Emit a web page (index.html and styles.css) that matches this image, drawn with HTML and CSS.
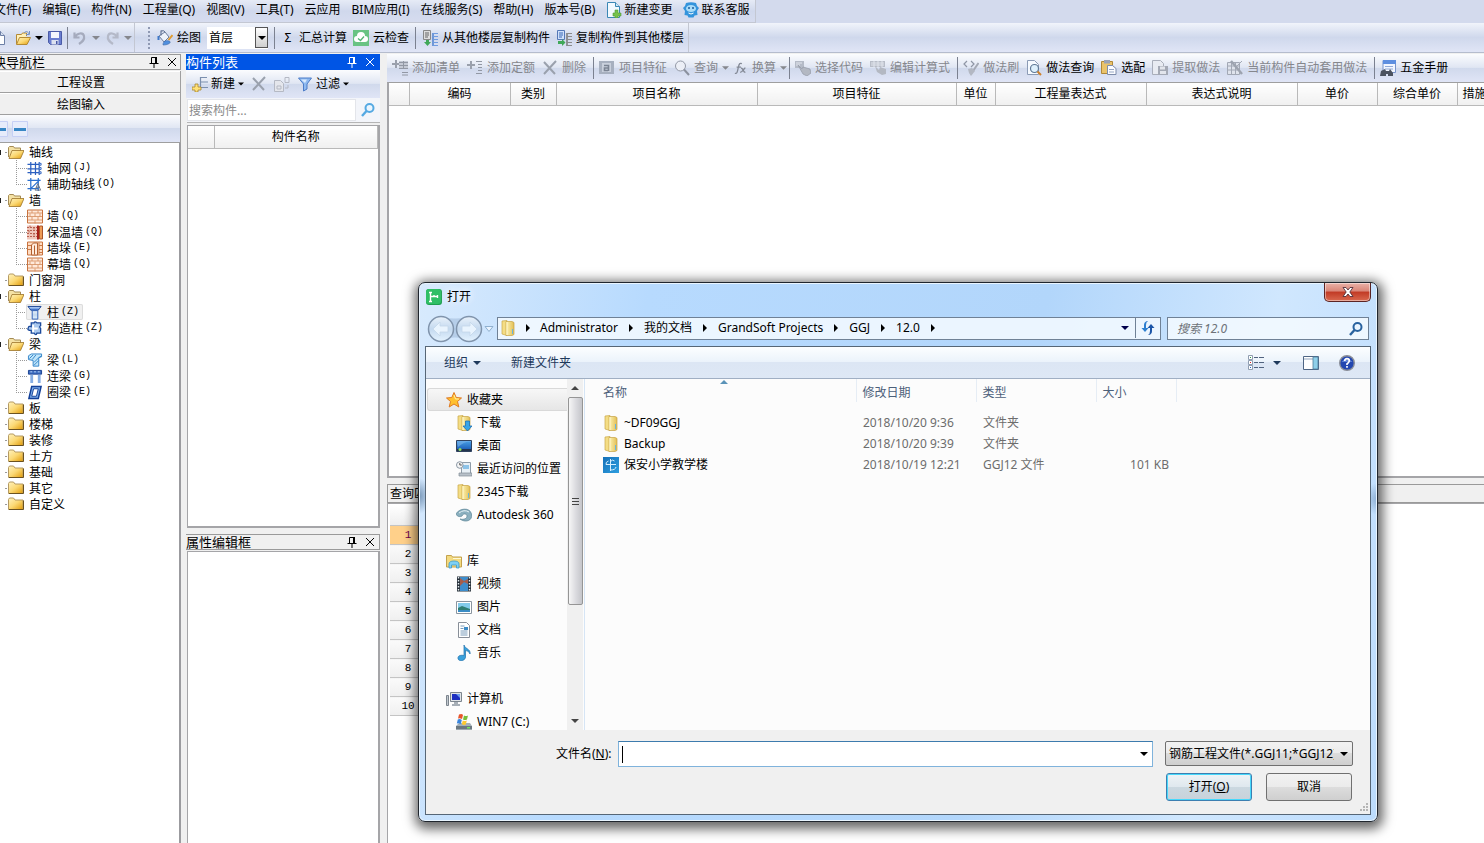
FILE: index.html
```html
<!DOCTYPE html>
<html lang="zh-CN">
<head>
<meta charset="utf-8">
<title>工程量</title>
<link rel="stylesheet" href="styles.css">
</head>
<body>
<svg class="defs" aria-hidden="true">
  <defs>
    <linearGradient id="gFold" x1="0" y1="0" x2="1" y2="1"><stop offset="0" stop-color="#fff3bf"/><stop offset=".5" stop-color="#fbd873"/><stop offset="1" stop-color="#e09a08"/></linearGradient>
    <linearGradient id="gWin" x1="0" y1="0" x2="1" y2="0"><stop offset="0" stop-color="#fdf3b4"/><stop offset="1" stop-color="#e2bf55"/></linearGradient>
    <linearGradient id="gBlue" x1="0" y1="0" x2="0" y2="1"><stop offset="0" stop-color="#4aa3e8"/><stop offset="1" stop-color="#1350ae"/></linearGradient>
    <linearGradient id="gCyan" x1="0" y1="0" x2="1" y2="1"><stop offset="0" stop-color="#1470b8"/><stop offset="1" stop-color="#2f9fe0"/></linearGradient>
    <linearGradient id="gPale" x1="0" y1="0" x2="0" y2="1"><stop offset="0" stop-color="#e9f2fb"/><stop offset=".5" stop-color="#c4d9ef"/><stop offset="1" stop-color="#e4f3ff"/></linearGradient>
  </defs>
  <symbol id="page" viewBox="0 0 16 16"><path d="M2.500 1.500h8l4 4v9h-12z" fill="#fdfeff" stroke="#6c7fa6"/><path d="M10.500 1.500v4h4" fill="#d5e0f0" stroke="#6c7fa6"/></symbol>
  <symbol id="open" viewBox="0 0 16 16"><path d="M1.500 14V4.500h5l1-1.500h4v3" fill="#fff0b8" stroke="#b48a35"/><path d="M9 3c2-2.500 4-1.500 5 1M14.500 1v3.500H11" fill="none" stroke="#7592c4"/><path d="M1.500 14.500l3-7h11l-3.500 7z" fill="url(#gFold)" stroke="#b48a35"/></symbol>
  <symbol id="save" viewBox="0 0 16 16"><path d="M1.500 1.500h13v13h-11l-2-2z" fill="#6a7ed0" stroke="#4a5ba6"/><path d="M4 2h8v6H4z" fill="#f4f7fd"/><path d="M4.500 10h7v4.500h-7z" fill="#dce2f0"/><path d="M9 11h1.500v3H9z" fill="#4657a5"/></symbol>
  <symbol id="undo" viewBox="0 0 16 16"><path d="M2.500 2.500v5h5M3 7c2-4 8-5 9-1s-2 6-5 8" fill="none" stroke="#a5abbd" stroke-width="2.200"/></symbol>
  <symbol id="redo" viewBox="0 0 16 16"><path d="M13.500 2.500v5h-5M13 7C11 3 5 2 4 6s2 6 5 8" fill="none" stroke="#b4b9c8" stroke-width="2.200"/></symbol>
  <symbol id="paint" viewBox="0 0 16 16"><path d="M2 6l6-4 4 5-5 5z" fill="#eef3fb" stroke="#6d7e9d"/><path d="M4 .5v5M4 1q3-1 4 1" fill="none" stroke="#55678a"/><path d="M1.500 6v4" stroke="#3f79c9" stroke-width="2"/><path d="M15.500 5l-4 5" stroke="#e09b2e" stroke-width="2"/><path d="M6 15c0-4 3-5 6-4s0 4-6 4z" fill="#4f8fdf" stroke="#3b67a5" stroke-width=".6"/></symbol>
  <symbol id="cloudok" viewBox="0 0 16 16"><path d="M0 0h16v16H0z" fill="#68c383"/><path d="M4 12a3 3 0 0 1 0-6 4 4 0 0 1 8 0 3 3 0 0 1 0 6z" fill="#fff"/><path d="M5 8.500l2.500 2 3.500-4" fill="none" stroke="#55b574" stroke-width="1.300"/></symbol>
  <symbol id="copyfrom" viewBox="0 0 16 16"><path d="M1.500.5h7v9h-7z" fill="#dedede" stroke="#888"/><path d="M3 3h4M3 5h4M3 7h3" stroke="#666"/><path d="M11 3v13" stroke="#4d80ce" stroke-width="1.500"/><path d="M11 3.500h5M11 6.500h5M11 9.500h5M11 12.500h5M11 15.500h5" stroke="#6f9be0"/><path d="M4 10v2H2l3.500 4L9 12H7v-2z" fill="#40a858"/></symbol>
  <symbol id="copyto" viewBox="0 0 16 16"><path d="M1.500.5h7v9h-7z" fill="#cfe0fb" stroke="#5478b7"/><path d="M3 3h4M3 5h4M3 7h3" stroke="#3868b5"/><path d="M11 3v13" stroke="#777" stroke-width="1.500"/><path d="M11 3.500h5M11 6.500h5M11 9.500h5M11 12.500h5M11 15.500h5" stroke="#8b8b8b"/><path d="M2 11h4V9l3.500 3.500L6 16v-2H2z" fill="#40a858"/></symbol>
  <symbol id="pageplus" viewBox="0 0 16 16"><path d="M1.500.5h8l4 4v11h-12z" fill="#f2f9ff" stroke="#3b87b5"/><path d="M9.500.5v4h4" fill="#cfe6f5" stroke="#3b87b5"/><path d="M9 8h3v3h3v3h-3v2H9v-2H7v-3h2z" fill="#75c14c" stroke="#4f9a35" stroke-width=".6"/></symbol>
  <symbol id="mascot" viewBox="0 0 16 16"><path d="M3 1q5-1.500 10 0l1 3 2 2-2 3 .5 4-3 .5-1 2h-5l-1-2-3-.5L2 9 0 6l2-2z" fill="#3494dc"/><ellipse cx="8" cy="6.500" rx="5" ry="3.600" fill="#a9dcf8"/><circle cx="6" cy="6" r="1" fill="#1d5c9c"/><circle cx="10" cy="6" r="1" fill="#1d5c9c"/><path d="M5.500 11q2.500 2 5 0" stroke="#fff" fill="none"/></symbol>
  <symbol id="pin" viewBox="0 0 12 12"><path d="M3.500 7V1.500h5V7M1.500 7.500h9M6 8v4" fill="none" stroke="currentColor"/><path d="M7 1h2v6H7z" fill="currentColor"/></symbol>
  <symbol id="close" viewBox="0 0 12 12"><path d="M2 2l8 8M10 2l-8 8" stroke="currentColor"/></symbol>
  <symbol id="down" viewBox="0 0 8 8"><path d="M0 2h8L4 6z" fill="currentColor"/></symbol>
  <symbol id="right" viewBox="0 0 8 8"><path d="M2 0l4 4-4 4z" fill="currentColor"/></symbol>
  <symbol id="newitem" viewBox="0 0 16 16"><path d="M8.500 1v11M8 1.500h7M8 6h8M8 11.500h8" stroke="#7b8fae" stroke-width="1.200" fill="none"/><path d="M3 8h3v3h3v3H6v2H3v-2H0v-3h3z" fill="#ffe27a" stroke="#a8872d" stroke-width=".8"/></symbol>
  <symbol id="delx" viewBox="0 0 16 16"><path d="M2 2l11 12M14 1L2 14" stroke="#9aa1ad" stroke-width="2"/></symbol>
  <symbol id="copyg" viewBox="0 0 16 16"><path d="M.5 4.500h6l3 3v8h-9z" fill="#e4e6ec" stroke="#b5b9c4"/><path d="M3 10h4v3H3zM11 1.500h4v5h-4zM11 12h3V9" fill="none" stroke="#b5b9c4"/></symbol>
  <symbol id="funnel" viewBox="0 0 16 16"><path d="M1.500 2h13L10 8v5l-3.500 2V8z" fill="#8fbaf0" stroke="#4c7cc8"/><path d="M4 3.500h6L8 7z" fill="#d9eafe"/></symbol>
  <symbol id="mag" viewBox="0 0 16 16"><circle cx="9.500" cy="6" r="4" fill="#eaf5ff" stroke="currentColor" stroke-width="2"/><path d="M6.500 9L2 14" stroke="currentColor" stroke-width="2.400"/></symbol>
  <symbol id="minus" viewBox="0 0 16 16"><path d="M.5.5h15v15H.5z" fill="#e6ecfb" stroke="#c6d0f5"/><path d="M2 7h12v3H2z" fill="#3787c5"/></symbol>
  <symbol id="addrow" viewBox="0 0 16 16"><path d="M3 0h2v3h3v2H5v3H3V5H0V3h3z" fill="#9aa0ac"/><path d="M7 1h9v8H7z" fill="#c5cad5"/><path d="M7 2.500h9M7 5.500h9M7 8.500h9M11.500 1v8M10 12.500h6M10 15h6" stroke="#9298a4"/></symbol>
  <symbol id="addquota" viewBox="0 0 16 16"><path d="M3 1h2v3h3v2H5v3H3V6H0V4h3z" fill="#9aa0ac"/><path d="M9 1.500h6M11 4.500h4M11 7.500h4M11 10.500h4M9 13.500h6" stroke="#9298a4"/></symbol>
  <symbol id="feature" viewBox="0 0 16 16"><path d="M0 1h15v13H0z" fill="#a7b0bf"/><path d="M3 3h9v9H3z" fill="#c9d0dc"/><path d="M5 5.500h4.500V11M9 8H5.500v2.500H9" fill="none" stroke="#7b8493" stroke-width="1.600"/></symbol>
  <symbol id="glass" viewBox="0 0 16 16"><circle cx="6.500" cy="6" r="5" fill="#eceff6" stroke="#9399a6"/><path d="M10 9.500l5 5.500" stroke="#8b919e" stroke-width="2"/></symbol>
  <symbol id="fx" viewBox="0 0 16 16"><path d="M1 14c3 1 3-3 4-7s1.500-5 4-4M3 7h5M8 8c3 0 2 5 5 5M13 8c-2 0-3 5-6 5" fill="none" stroke="#838995" stroke-width="1.500"/></symbol>
  <symbol id="selcode" viewBox="0 0 16 16"><path d="M0 1h9v7H0z" fill="#b5bbc7"/><path d="M1 3h6M1 5h4" stroke="#e3e7ef"/><path d="M3 5l4 4 1-2 7 2 1 4-4 3-4-2z" fill="#b3b8c2" stroke="#949aa6" stroke-width=".7"/></symbol>
  <symbol id="editexp" viewBox="0 0 16 16"><path d="M0 1h15v6H0z" fill="#b8bdc8"/><path d="M1 3h13M1 5h13M4 1v6M8 1v6M12 1v6" stroke="#e1e5ed"/><path d="M5 6l4 4 1-3 6 2v5l-4 1-5-3z" fill="#b3b8c2"/></symbol>
  <symbol id="brush" viewBox="0 0 16 16"><path d="M4 1L1 4l3 3M8 1l3 3-3 3" fill="none" stroke="#8f96a5" stroke-width="1.200"/><path d="M15.500 3L10 11" stroke="#a4a9b4" stroke-width="2"/><path d="M5 9l4-1 3 3-4 5-2-3z" fill="#b3b8c3"/></symbol>
  <symbol id="pagemag" viewBox="0 0 16 16"><path d="M1.500.5h7l4 4v10h-11z" fill="#f6faff" stroke="#8b9bb5"/><circle cx="8.500" cy="8.500" r="4" fill="#def0fc" stroke="#5f7895" stroke-width="1.200"/><path d="M11.500 11.500l3.500 3.500" stroke="#cf812c" stroke-width="2"/></symbol>
  <symbol id="paste" viewBox="0 0 16 16"><path d="M.5 1.500h11v12H.5z" fill="#eac36a" stroke="#b08838"/><path d="M3 0h6v3.500H3z" fill="#9ba3b5"/><path d="M6.500 5.500h5l3.500 3v6H6.500z" fill="#fbfcff" stroke="#7d8cab"/><path d="M8 9.500h5M8 12h5" stroke="#98a8c4"/></symbol>
  <symbol id="extract" viewBox="0 0 16 16"><path d="M.5.5h8l3 3v11H.5z" fill="#e8ebf2" stroke="#a9aeba"/><path d="M6 6h10v9H6z" fill="#a4a9b5"/><path d="M8 6.500h5v3H8zM8 11h6v3H8z" fill="#e2e5ec"/></symbol>
  <symbol id="autoapply" viewBox="0 0 16 16"><path d="M.5 2.500h12v12H.5z" fill="#dfe3ec" stroke="#a2a8b5"/><path d="M1 6h12M1 10h12M4.500 3v12M8.500 3v12" stroke="#a2a8b5"/><path d="M4 1l11 13" stroke="#9da3af" stroke-width="2.400"/><path d="M10 6l5-5" stroke="#a2a8b5"/></symbol>
  <symbol id="manual" viewBox="0 0 16 16"><path d="M3 .5h12.500v12H3z" fill="#f2f6ff" stroke="#7894ca"/><path d="M3 0h13v4H3z" fill="#5e8fe0"/><path d="M5 6.500h8M5 9h8" stroke="#93acd8"/><path d="M1 11l4-2 1 2h3l1-2 3 4v3H8v-2H6v2H0z" fill="#4c535f"/></symbol>
  <symbol id="fopen" viewBox="0 0 16 14"><path d="M.5 12V2.500l1-1h4l1 1.500h6V6" fill="#f5e2a5" stroke="#a48b55"/><path d="M1 13.500L4 5.500h12L12.500 13.500z" fill="url(#gFold)" stroke="#9c742a" stroke-width=".8"/></symbol>
  <symbol id="fclosed" viewBox="0 0 16 14"><path d="M.5 12.500v-10l1-1.500h4l1.500 2h8v9.500z" fill="url(#gFold)" stroke="#b59a62"/><path d="M1 12.500h14.500v-9" fill="none" stroke="#6b5220"/></symbol>
  <symbol id="axis" viewBox="0 0 16 16"><path d="M3.500 1v14M8.500 1v14M0 3.500h12M0 8.500h12M0 12.500h12M12.500 1v14" stroke="#2b5fc0" stroke-width="1.300"/><path d="M12.500 2.500h2v2h-2zM12.500 7h2v2h-2zM12.500 11.500h2v2h-2z" fill="#fff" stroke="#2b5fc0"/></symbol>
  <symbol id="axis2" viewBox="0 0 16 16"><path d="M3.500 1v14M0 3.500h14M0 12.500h12M11.500 1v14M3 13L13 3" stroke="#2b70d0" stroke-width="1.300"/><path d="M8 14l3-7 3 7zM9 11h4" fill="none" stroke="#6d7686"/></symbol>
  <symbol id="brick" viewBox="0 0 16 14"><path d="M.5.5h15v13H.5z" fill="#ffe9da" stroke="#c8733f"/><path d="M1 3.500h14M1 7h14M1 10.500h14M5 1v2.500M11 1v2.500M3 4v3M8 4v3M13 4v3M5 7.500v3M11 7.500v3M8 11v3" stroke="#d48c5c" stroke-width=".8"/></symbol>
  <symbol id="brick2" viewBox="0 0 16 14"><path d="M0 0h11v14H0z" fill="#f0c7bb"/><path d="M0 2h10M0 5h10M0 8h10M0 11h10M3 0v2M7 2v3M2 5v3M7 8v3" stroke="#b8604f" stroke-dasharray="2 1"/><path d="M10 0h2v14h-2z" fill="#a81f18"/><path d="M12.500.5h3v13h-3z" fill="#ee9c57" stroke="#ab552a"/></symbol>
  <symbol id="pier" viewBox="0 0 16 14"><path d="M.5.5h15v13H.5z" fill="#ffdcc2" stroke="#c8733f"/><path d="M1 4h4M1 8h4M12 4h3M12 8h3M12 11h3M12 1v12" stroke="#c97945"/><path d="M4.500 3.500l2-2h4v12h-6z" fill="#ffeadb" stroke="#b4602f"/><path d="M7.500 4v9" stroke="#b4602f"/></symbol>
  <symbol id="column" viewBox="0 0 16 16"><path d="M.5 1.500h14l-3 4h-8z" fill="#5a8de0" stroke="#143f91"/><path d="M5 6h6v9H5z" fill="url(#gPale)" stroke="#2d5eb5"/><path d="M2 3h11" stroke="#cde2fa"/></symbol>
  <symbol id="ccolumn" viewBox="0 0 16 16"><path d="M4 2h3q1-2 3 0h4v3q-2 1 0 3v5h-4q-1 3-3 0H4v-3q-5 0-3-3 0-2 3-1z" fill="#a9c8ee" stroke="#1c4a9c" stroke-width="1.400"/><path d="M6 4v8M6 8h5" stroke="#fff" stroke-width="2"/></symbol>
  <symbol id="beam" viewBox="0 0 16 16"><path d="M1 3l3-2h11v3l-3 1v9H6V8L1 7z" fill="#bfe4fa" stroke="#3384c8"/><path d="M2 6l4-4M5 7l4-5M12 5l3-2M7 10l5-5M7 13l5-5" stroke="#3384c8"/></symbol>
  <symbol id="lbeam" viewBox="0 0 16 16"><path d="M1 1.500h14v4H1z" fill="#3f6fc2" stroke="#153e8f"/><path d="M3 3h2M7 3h2M11 3h2" stroke="#bcd5f7"/><path d="M3 6h3v9H3zM11 6h3v9h-3z" fill="#86aee4"/></symbol>
  <symbol id="rbeam" viewBox="0 0 16 16"><path d="M4.500 1.500h10l-3 13H1.500z" fill="#7badea" stroke="#123f97" stroke-width="1.600"/><path d="M6.500 4h5l-2 8H4.500z" fill="#fff" stroke="#123f97"/></symbol>
  <symbol id="wfold" viewBox="0 0 16 16"><path d="M2 1l5-.5v15L2 14z" fill="#f4dd85" stroke="#c9a749" stroke-width=".7"/><path d="M6 1.500h6l2 1v12l-2 1H6z" fill="url(#gWin)" stroke="#c5a244" stroke-width=".7"/><path d="M7 2v13" stroke="#fff6c9"/><path d="M12.500 9v5" stroke="#69b5df"/></symbol>
  <symbol id="star" viewBox="0 0 16 16"><path d="M8 .5l2.200 5 5.300.5-4 3.500 1.300 5.500L8 12l-4.800 3 1.300-5.500-4-3.500 5.300-.5z" fill="#ffc02e" stroke="#df7a22"/><path d="M8 3l1.500 4H13" fill="none" stroke="#fff2a8"/></symbol>
  <symbol id="dl" viewBox="0 0 16 16"><use href="#wfold"/><path d="M9.500 6h4v5H16l-4.500 5L7 11h2.500z" fill="#38a5e8" stroke="#1f71b5" stroke-width=".8"/></symbol>
  <symbol id="desk" viewBox="0 0 16 16"><path d="M.5 2.500h15v11H.5z" fill="url(#gBlue)" stroke="#30425e"/><path d="M1 11h14v2H1z" fill="#23334e"/><circle cx="4" cy="11.500" r="1.500" fill="#8ddc62"/><path d="M2 9q7-6 13-5V3H1z" fill="#7db4ea" opacity=".6"/></symbol>
  <symbol id="recent" viewBox="0 0 16 16"><path d="M5.500 1.500h9v12h-9z" fill="#e8f0f6" stroke="#8f9ca8"/><path d="M7 4h6v4H7z" fill="#8dc3e8"/><path d="M3 12h13v3H3z" fill="#b8c1c9" stroke="#838d97" stroke-width=".7"/><circle cx="3.800" cy="4" r="3.300" fill="#f5f5f5" stroke="#8b98a5"/><path d="M3.800 2v2h2" stroke="#555" fill="none"/></symbol>
  <symbol id="a360" viewBox="0 0 16 16"><path d="M0 7C3 1 14 0 15.500 7S9 16 4 12c4 1 7-.5 7-3S7 6 6 9c-1 1-5 1-6-2z" fill="#8bb0bf" stroke="#5f8798" stroke-width=".7"/><path d="M3 6q5-4 10-1" stroke="#e6f2f6" fill="none"/></symbol>
  <symbol id="lib" viewBox="0 0 16 16"><path d="M.5 14V2.500h5l1 1.500h9v10z" fill="#f3da80" stroke="#c4a24c"/><path d="M3 15v-4q0-3 5-3t5 3v4h-2.500v-3h-5v3z" fill="#7fd0f5" stroke="#3b9bcc" stroke-width=".8"/><path d="M7 5.500h8" stroke="#fff8d4"/></symbol>
  <symbol id="video" viewBox="0 0 16 16"><path d="M1 .5h14v15H1z" fill="#29323b"/><path d="M4 1h8v14H4z" fill="#3d8dcc"/><path d="M4 2l4 3 4-2v5l-4-2-4 4z" fill="#a65d4a"/><path d="M2.500 1v15M13.500 1v15" stroke="#e6edf2" stroke-width="1.400" stroke-dasharray="1.500 1.500"/></symbol>
  <symbol id="pic" viewBox="0 0 16 16"><path d="M.5 2.500h15v12H.5z" fill="#fff" stroke="#8a959f"/><path d="M2 4h12v9H2z" fill="#83cbea"/><path d="M2 9l4-2 8 3v3H2z" fill="#2f7e72"/><path d="M2 11h12v2H2z" fill="#3a8cc4"/></symbol>
  <symbol id="doc" viewBox="0 0 16 16"><path d="M2.500.5h8l3 3v12h-11z" fill="#fff" stroke="#888f98"/><path d="M4.500 4h4M4.500 6.500h3M4.500 9h7M4.500 11h7M4.500 13h7" stroke="#7a9cba"/><path d="M8 5h4v3H8z" fill="#3d8bc6"/></symbol>
  <symbol id="music" viewBox="0 0 16 16"><path d="M8 0c1 4 7 4 6 9-1-3-3-3-4.500-3.500V12c0 4-7 5-7.500 1.500S6 10 8 10.500z" fill="#3aa1dc" stroke="#1d6eab" stroke-width=".7"/></symbol>
  <symbol id="comp" viewBox="0 0 16 16"><path d="M.5 4.500h2v10h-2z" fill="#c3c9cf" stroke="#7c858e"/><path d="M4.500 1.500h11v9h-11z" fill="#dfe3e7" stroke="#7c858e"/><path d="M6 3h8v6H6z" fill="#1d2fc0"/><path d="M10 3h4v4z" fill="#6d9df0"/><path d="M8 11h4v2h2v2H6v-2h2z" fill="#a7afb7"/></symbol>
  <symbol id="drive" viewBox="0 0 16 16"><path d="M0 12l3-3h11l2 3v3.500H0z" fill="#a4b0b8"/><path d="M0 12h16v3.500H0z" fill="#6b7881"/><path d="M11 13h3v1.500h-3z" fill="#73e35d"/><path d="M3 .5q3-1 4 .5L6 5Q4 4 2 4.500z" fill="#e9552b"/><path d="M8 1.500q2 1 4 0L11 5.500q-2 1-4 0z" fill="#79be3a"/><path d="M1.800 5.500q2-1 4 .5l-1 4q-2-1-4-.5z" fill="#3a86dd"/><path d="M6.800 6.500q2 1 4 0l-1 4q-2 1-4-.5z" fill="#ffc930"/></symbol>
  <symbol id="ggj" viewBox="0 0 16 16"><path d="M0 0h16v16H0z" fill="url(#gCyan)"/><path d="M7.500 2v12M3 7.500h10M5.500 4q-3 1-2.500 3.500M7.500 4.500q2-2.500 4-.5M7.500 13q5 0 5.500-3" fill="none" stroke="#d7efff"/></symbol>
  <symbol id="app" viewBox="0 0 16 16"><rect width="16" height="16" rx="3" fill="#1f9f50"/><rect width="15" height="15" rx="3" fill="#2fbf66"/><path d="M4.500 3v9.500M4.500 7.500H11M3 3.500h3M3 12.500h3M11.500 6v3M8 6v2" stroke="#fff" stroke-width="1.400" fill="none"/></symbol>
  <symbol id="refresh" viewBox="0 0 16 16"><path d="M4 8V5q0-3 3-4h1Q6 2 6 5v3h2.500L5 12 1.500 8z" fill="#2e7fd0"/><path d="M10 8v3q0 3-2 4h1q3-1 3-4V8h2.500L11 4 7.500 8z" fill="#1d56a8"/></symbol>
  <symbol id="views" viewBox="0 0 16 16"><path d="M.5.500h4v4h-4zM.5 5.500h4v4h-4zM.5 10.500h4v4h-4z" fill="#fff" stroke="#8f9db0"/><path d="M2 2h1v1H2z" fill="#2a9a3a"/><path d="M2 7h1v1H2z" fill="#d22"/><path d="M2 12h1v1H2z" fill="#26c"/><path d="M6 2.500h4M11 2.500h5M6 7.500h4M11 7.500h5M6 12.500h4M11 12.500h5" stroke="#51637f"/></symbol>
  <symbol id="pane" viewBox="0 0 16 16"><path d="M.5 1.500h15v13H.5z" fill="#fff" stroke="#4f6685"/><path d="M1 4h9" stroke="#8fa4bd"/><path d="M10 2h5v12h-5z" fill="#8fd0ea" stroke="#4f7d9c" stroke-width=".8"/></symbol>
  <symbol id="help" viewBox="0 0 16 16"><circle cx="8" cy="8" r="7.300" fill="#2347b0" stroke="#8b8f98" stroke-width="1.400"/><path d="M2.500 7q5-7 11 0z" fill="#7c9ce6" opacity=".7"/><path d="M5.700 6q0-2.300 2.300-2.300T10.300 6Q10.300 7 8 9v1M8 11v1.700" fill="none" stroke="#fff" stroke-width="1.700"/></symbol>
</svg>

<header class="top">
  <nav class="menubar">
    <button>文件(F)</button><button>编辑(E)</button><button>构件(N)</button><button>工程量(Q)</button><button>视图(V)</button><button>工具(T)</button><button>云应用</button><button>BIM应用(I)</button><button>在线服务(S)</button><button>帮助(H)</button><button>版本号(B)</button>
    <button><svg class="ic"><use href="#pageplus"/></svg>新建变更</button>
    <button><svg class="ic"><use href="#mascot"/></svg>联系客服</button>
  </nav>
  <div class="mainbar">
    <div class="quick">
      <button aria-label="新建"><svg class="ic"><use href="#page"/></svg></button>
      <button aria-label="打开"><svg class="ic"><use href="#open"/></svg><svg class="arr"><use href="#down"/></svg></button>
      <button aria-label="保存"><svg class="ic"><use href="#save"/></svg></button>
      <i class="sep"></i>
      <button aria-label="撤销" class="off"><svg class="ic"><use href="#undo"/></svg><svg class="arr"><use href="#down"/></svg></button>
      <button aria-label="恢复" class="off"><svg class="ic"><use href="#redo"/></svg><svg class="arr"><use href="#down"/></svg></button>
    </div>
    <div class="tools">
      <i class="grip"></i>
      <button><svg class="ic"><use href="#paint"/></svg>绘图</button>
      <span class="floor"><select aria-label="楼层"><option>首层</option></select><span class="drop"><svg class="arr"><use href="#down"/></svg></span></span>
      <i class="sep"></i>
      <button><span class="sigma">Σ</span>汇总计算</button>
      <button><svg class="ic"><use href="#cloudok"/></svg>云检查</button>
      <i class="sep"></i>
      <button><svg class="ic"><use href="#copyfrom"/></svg>从其他楼层复制构件</button>
      <button><svg class="ic"><use href="#copyto"/></svg>复制构件到其他楼层</button>
    </div>
  </div>
</header>

<main class="work">
  <aside class="nav">
    <div class="cap"><h2>模块导航栏</h2><svg class="cic"><use href="#pin"/></svg><svg class="cic"><use href="#close"/></svg></div>
    <button class="wide">工程设置</button>
    <button class="wide">绘图输入</button>
    <div class="navbar"><button aria-label="展开"><svg class="ic"><use href="#minus"/></svg></button><button aria-label="折叠"><svg class="ic"><use href="#minus"/></svg></button></div>
    <ul class="tree">
      <li class="root open"><svg class="fic"><use href="#fopen"/></svg>轴线</li>
      <li class="leaf"><svg class="tic"><use href="#axis"/></svg>轴网<span>(J)</span></li>
      <li class="leaf last"><svg class="tic"><use href="#axis2"/></svg>辅助轴线<span>(O)</span></li>
      <li class="root open"><svg class="fic"><use href="#fopen"/></svg>墙</li>
      <li class="leaf"><svg class="tic"><use href="#brick"/></svg>墙<span>(Q)</span></li>
      <li class="leaf"><svg class="tic"><use href="#brick2"/></svg>保温墙<span>(Q)</span></li>
      <li class="leaf"><svg class="tic"><use href="#pier"/></svg>墙垛<span>(E)</span></li>
      <li class="leaf last"><svg class="tic"><use href="#brick"/></svg>幕墙<span>(Q)</span></li>
      <li class="root"><svg class="fic"><use href="#fclosed"/></svg>门窗洞</li>
      <li class="root open"><svg class="fic"><use href="#fopen"/></svg>柱</li>
      <li class="leaf"><b class="picked"><svg class="tic"><use href="#column"/></svg>柱<span>(Z)</span></b></li>
      <li class="leaf last"><svg class="tic"><use href="#ccolumn"/></svg>构造柱<span>(Z)</span></li>
      <li class="root open"><svg class="fic"><use href="#fopen"/></svg>梁</li>
      <li class="leaf"><svg class="tic"><use href="#beam"/></svg>梁<span>(L)</span></li>
      <li class="leaf"><svg class="tic"><use href="#lbeam"/></svg>连梁<span>(G)</span></li>
      <li class="leaf last"><svg class="tic"><use href="#rbeam"/></svg>圈梁<span>(E)</span></li>
      <li class="root"><svg class="fic"><use href="#fclosed"/></svg>板</li>
      <li class="root"><svg class="fic"><use href="#fclosed"/></svg>楼梯</li>
      <li class="root"><svg class="fic"><use href="#fclosed"/></svg>装修</li>
      <li class="root"><svg class="fic"><use href="#fclosed"/></svg>土方</li>
      <li class="root"><svg class="fic"><use href="#fclosed"/></svg>基础</li>
      <li class="root"><svg class="fic"><use href="#fclosed"/></svg>其它</li>
      <li class="root"><svg class="fic"><use href="#fclosed"/></svg>自定义</li>
    </ul>
  </aside>

  <section class="mid">
    <div class="cap active"><h2>构件列表</h2><svg class="cic"><use href="#pin"/></svg><svg class="cic"><use href="#close"/></svg></div>
    <div class="midbar">
      <button><svg class="ic"><use href="#newitem"/></svg>新建<svg class="arr small"><use href="#down"/></svg></button>
      <button aria-label="删除"><svg class="ic"><use href="#delx"/></svg></button>
      <button aria-label="复制"><svg class="ic"><use href="#copyg"/></svg></button>
      <button><svg class="ic"><use href="#funnel"/></svg>过滤<svg class="arr small"><use href="#down"/></svg></button>
    </div>
    <div class="find"><input type="text" aria-label="搜索构件" placeholder="搜索构件..."><button aria-label="搜索"><svg class="ic"><use href="#mag"/></svg></button></div>
    <div class="box list"><table class="grid"><colgroup><col class="c26"><col></colgroup><thead><tr><th></th><th>构件名称</th></tr></thead></table></div>
    <div class="cap props"><h2>属性编辑框</h2><svg class="cic"><use href="#pin"/></svg><svg class="cic"><use href="#close"/></svg></div>
    <div class="box rest"></div>
  </section>

  <section class="right">
    <div class="actbar">
      <button class="off"><svg class="ic"><use href="#addrow"/></svg>添加清单</button>
      <button class="off"><svg class="ic"><use href="#addquota"/></svg>添加定额</button>
      <button class="off"><svg class="ic"><use href="#delx"/></svg>删除</button>
      <i class="sep"></i>
      <button class="off"><svg class="ic"><use href="#feature"/></svg>项目特征</button>
      <button class="off"><svg class="ic"><use href="#glass"/></svg>查询<svg class="arr"><use href="#down"/></svg></button>
      <button class="off"><svg class="ic narrow"><use href="#fx"/></svg>换算<svg class="arr"><use href="#down"/></svg></button>
      <i class="sep tight"></i>
      <button class="off"><svg class="ic"><use href="#selcode"/></svg>选择代码</button>
      <button class="off"><svg class="ic"><use href="#editexp"/></svg>编辑计算式</button>
      <i class="sep"></i>
      <button class="off"><svg class="ic"><use href="#brush"/></svg>做法刷</button>
      <button><svg class="ic"><use href="#pagemag"/></svg>做法查询</button>
      <button><svg class="ic"><use href="#paste"/></svg>选配</button>
      <button class="off"><svg class="ic"><use href="#extract"/></svg>提取做法</button>
      <button class="off"><svg class="ic"><use href="#autoapply"/></svg>当前构件自动套用做法</button>
      <i class="sep"></i>
      <button><svg class="ic"><use href="#manual"/></svg>五金手册</button>
    </div>
    <div class="sheet">
      <table class="grid">
        <colgroup><col class="c20"><col class="c101"><col class="c46"><col class="c201"><col class="c199"><col class="c39"><col class="c151"><col class="c151"><col class="c80"><col class="c80"><col></colgroup>
        <thead><tr><th></th><th>编码</th><th>类别</th><th>项目名称</th><th>项目特征</th><th>单位</th><th>工程量表达式</th><th>表达式说明</th><th>单价</th><th>综合单价</th><th class="cut">措施项目</th></tr></thead>
      </table>
    </div>
    <div class="qcap">查询匹配清单</div>
    <div class="qbody">
      <table class="nums">
        <thead><tr><th></th></tr></thead>
        <tbody><tr class="cur"><td>1</td></tr><tr><td>2</td></tr><tr><td>3</td></tr><tr><td>4</td></tr><tr><td>5</td></tr><tr><td>6</td></tr><tr><td>7</td></tr><tr><td>8</td></tr><tr><td>9</td></tr><tr><td>10</td></tr></tbody>
      </table>
    </div>
  </section>
</main>

<div class="dialog" role="dialog" aria-labelledby="dlgname">
  <div class="dtitle"><svg class="ic"><use href="#app"/></svg><h1 id="dlgname">打开</h1>
    <button class="x" aria-label="关闭"><svg viewBox="0 0 12 10"><path d="M1 .5h3l2 2.500 2-2.500h3L7.800 5 11 9.500H8L6 7 4 9.500H1L4.200 5z" fill="#fff" stroke="#54303a" stroke-width=".9"/></svg></button></div>
  <div class="dnav">
    <svg class="bf" viewBox="0 0 56 28"><path d="M14 2q14 3 28 0v22q-14-3-28 0z" fill="#a9c3df" opacity=".7"/><circle cx="14" cy="14" r="12.500" fill="url(#gPale)" stroke="#8094ac" stroke-width="1.500"/><circle cx="42" cy="14" r="12.500" fill="url(#gPale)" stroke="#8094ac" stroke-width="1.500"/><path d="M6 14l7-7v4h8v6h-8v4z" fill="#e9f4fe" stroke="#c4d7ea" stroke-width=".8"/><path d="M50 14l-7-7v4h-8v6h8v4z" fill="#e9f4fe" stroke="#c4d7ea" stroke-width=".8"/></svg>
    <svg class="recentarr" viewBox="0 0 10 8"><path d="M1 1.500h8L5 6.500z" fill="#eaf4ff" stroke="#8fb0cf"/></svg>
    <div class="addr">
      <svg class="ic"><use href="#wfold"/></svg>
      <svg class="crumb first"><use href="#right"/></svg><span>Administrator</span>
      <svg class="crumb"><use href="#right"/></svg><span>我的文档</span>
      <svg class="crumb"><use href="#right"/></svg><span>GrandSoft Projects</span>
      <svg class="crumb"><use href="#right"/></svg><span>GGJ</span>
      <svg class="crumb"><use href="#right"/></svg><span>12.0</span>
      <svg class="crumb"><use href="#right"/></svg>
      <button class="pathdrop" aria-label="历史路径"><svg class="arr"><use href="#down"/></svg></button>
      <button class="reload" aria-label="刷新"><svg class="ic"><use href="#refresh"/></svg></button>
    </div>
    <div class="dsearch"><input type="text" aria-label="搜索" placeholder="搜索 12.0"><svg class="ic"><use href="#mag"/></svg></div>
  </div>
  <div class="client">
    <div class="cmd">
      <button>组织<svg class="arr"><use href="#down"/></svg></button>
      <button>新建文件夹</button>
      <button class="views" aria-label="视图"><svg class="ic"><use href="#views"/></svg><svg class="arr"><use href="#down"/></svg></button>
      <button aria-label="预览窗格"><svg class="ic"><use href="#pane"/></svg></button>
      <button aria-label="帮助"><svg class="ic"><use href="#help"/></svg></button>
    </div>
    <div class="files">
      <ul class="places">
        <li class="head on"><svg class="ic"><use href="#star"/></svg>收藏夹</li>
        <li><svg class="ic"><use href="#dl"/></svg>下载</li>
        <li><svg class="ic"><use href="#desk"/></svg>桌面</li>
        <li><svg class="ic"><use href="#recent"/></svg>最近访问的位置</li>
        <li><svg class="ic"><use href="#wfold"/></svg>2345下载</li>
        <li><svg class="ic"><use href="#a360"/></svg>Autodesk 360</li>
        <li class="head gap"><svg class="ic"><use href="#lib"/></svg>库</li>
        <li><svg class="ic"><use href="#video"/></svg>视频</li>
        <li><svg class="ic"><use href="#pic"/></svg>图片</li>
        <li><svg class="ic"><use href="#doc"/></svg>文档</li>
        <li><svg class="ic"><use href="#music"/></svg>音乐</li>
        <li class="head gap"><svg class="ic"><use href="#comp"/></svg>计算机</li>
        <li><svg class="ic"><use href="#drive"/></svg>WIN7 (C:)</li>
      </ul>
      <div class="scroll"><svg class="arr up"><use href="#down"/></svg><div class="thumb"><i></i><i></i><i></i></div><svg class="arr"><use href="#down"/></svg></div>
      <div class="listing">
        <table>
          <colgroup><col class="c271"><col class="c120"><col class="c120"><col class="c80"><col></colgroup>
          <thead><tr><th><svg class="sort" viewBox="0 0 8 4"><path d="M0 4h8L4 0z" fill="#5b93b8"/></svg>名称</th><th>修改日期</th><th>类型</th><th>大小</th><th></th></tr></thead>
          <tbody>
            <tr><td><span><svg class="ic"><use href="#wfold"/></svg>~DF09GGJ</span></td><td>2018/10/20 9:36</td><td>文件夹</td><td></td><td></td></tr>
            <tr><td><span><svg class="ic"><use href="#wfold"/></svg>Backup</span></td><td>2018/10/20 9:39</td><td>文件夹</td><td></td><td></td></tr>
            <tr><td><span><svg class="ic"><use href="#ggj"/></svg>保安小学教学楼</span></td><td>2018/10/19 12:21</td><td>GGJ12 文件</td><td class="size">101 KB</td><td></td></tr>
          </tbody>
        </table>
      </div>
    </div>
    <div class="foot">
      <label for="fname">文件名(<u>N</u>):</label>
      <div class="combo"><i class="caret"></i><input id="fname" type="text"><button aria-label="历史文件名"><svg class="arr"><use href="#down"/></svg></button></div>
      <div class="choices">
        <span class="ftype"><select aria-label="文件类型"><option>钢筋工程文件(*.GGJ11;*GGJ12)</option></select><svg class="arr"><use href="#down"/></svg></span>
        <div class="btns"><button class="push primary">打开(<u>O</u>)</button><button class="push">取消</button></div>
      </div>
      <svg class="size-grip" viewBox="0 0 9 9"><path d="M7 1h2M4 4h2M7 4h2M1 7h2M4 7h2M7 7h2" stroke="#b5b5b5" stroke-width="2"/></svg>
    </div>
  </div>
</div>
</body>
</html>
```
FILE: styles.css
```css
* { box-sizing: border-box; }
html, body { height: 100%; }
body {
  margin: 0;
  display: flex;
  flex-direction: column;
  overflow: hidden;
  position: relative;
  background: #f0f0f0;
  color: #000;
  font: 12px/16px "Noto Sans", "Noto Sans CJK SC", sans-serif;
  white-space: nowrap;
}
button, input, select { font: inherit; color: inherit; margin: 0; }
button {
  display: flex;
  align-items: center;
  gap: 4px;
  padding: 0;
  border: 0;
  background: none;
  flex: none;
}
h1, h2 { margin: 0; font: inherit; }
ul { margin: 0; padding: 0; list-style: none; }
table { border-collapse: collapse; border-spacing: 0; }
.defs { position: absolute; width: 0; height: 0; }
.ic { width: 16px; height: 16px; flex: none; display: block; }
.ic.narrow { width: 14px; }
.arr { width: 8px; height: 8px; flex: none; display: block; }
.arr.small { width: 6px; height: 6px; }
.off { color: #85878d; }
.sep { width: 1px; height: 22px; background: #7b8190; flex: none; }

/* Menu and main toolbar */
.top { flex: none; background: #d3daed; }
.menubar {
  display: flex;
  align-items: center;
  gap: 11px;
  width: max-content;
  height: 23px;
  padding: 0 6px 3px 0;
  margin-left: -6px;
  background: linear-gradient(#e6ebf6, #d0d8ec 50%, #d6dcef);
  border-right: 1px solid #c3c7d2;
  border-bottom: 1px solid #c3c7d2;
}
.menubar button { gap: 2px; }
.mainbar {
  display: flex;
  height: 30px;
  background: linear-gradient(#f1f4fb, #cfd8ec 50%, #e0e5f6);
  border-bottom: 1px solid #b5bccd;
}
.quick {
  display: flex;
  align-items: center;
  gap: 4px;
  margin-left: -10px;
  padding-right: 2px;
  border-right: 1px solid #c3c7d2;
}
.quick button:first-child { margin-right: 5px; }
.tools {
  display: flex;
  align-items: center;
  gap: 6px;
  margin-left: 13px;
  padding-right: 4px;
  border-right: 1px solid #c3c7d2;
}
.grip { width: 2px; height: 22px; margin-right: 1px; background: repeating-linear-gradient(#8f99b3 0 2px, transparent 2px 4px); }
.floor { display: grid; width: 61px; height: 22px; background: #fff; align-items: center; }
.floor select { grid-area: 1 / 1; appearance: none; border: 0; background: none; padding: 0 2px; height: 22px; width: 100%; }
.floor .drop {
  grid-area: 1 / 1;
  justify-self: end;
  display: grid;
  place-items: center;
  width: 13px;
  height: 21px;
  border: 1px solid #555;
  background: linear-gradient(#fff, #cfcfcf);
  pointer-events: none;
}
.sigma { width: 14px; text-align: center; }

/* Workspace columns */
.work { flex: 1; min-height: 0; display: grid; grid-template-columns: 181px 194px minmax(0, 1fr); column-gap: 5px; padding-top: 1px; }
.cap {
  display: flex;
  align-items: center;
  gap: 6px;
  flex: none;
  height: 16px;
  padding-right: 3px;
  border: 1px solid #9a9a9a;
  border-left: 0;
  font: 13px/14px "Noto Sans CJK SC", sans-serif;
}
.cap h2 { flex: 1; }
.cic { width: 12px; height: 12px; flex: none; }
.cap.active { background: #0055e5; border-color: #0055e5; color: #fff; }

.nav { display: flex; flex-direction: column; overflow: hidden; }
.nav .cap { margin-bottom: 1px; padding-right: 2px; }
.nav .cap h2 { margin-left: -20px; }
.wide {
  justify-content: center;
  height: 22px;
  padding: 2px 18px 0 0;
  border-bottom: 1px solid #9f9f9f;
  border-right: 1px solid #9f9f9f;
  box-shadow: inset 0 1px #fff;
}
.navbar {
  display: flex;
  align-items: center;
  gap: 4px;
  height: 28px;
  margin-left: -8px;
  border-right: 1px solid #9f9f9f;
  border-bottom: 1px solid #9f9f9f;
  background: linear-gradient(#fbfcfe, #e0e6f3 48%, #d0d9ec 50%, #e0e5f6);
}
.tree {
  flex: 1;
  padding-top: 1px;
  background: #fff;
  border-right: 2px solid #9b9b9f;
  font-family: "Noto Sans CJK SC", sans-serif;
}
.tree li { display: flex; align-items: center; height: 16px; }
.tree span { font: 10px/16px "Liberation Mono", monospace; margin-left: 2px; }
.root { gap: 5px; padding-left: 8px; background: linear-gradient(#999, #999) 5px 8px / 2px 1px no-repeat; }
.root.open { background: linear-gradient(#222, #222) 0 6px / 1px 5px no-repeat, linear-gradient(#999, #999) 5px 8px / 2px 1px no-repeat; }
.fic { width: 16px; height: 14px; flex: none; }
.tic { width: 16px; height: 15px; flex: none; margin-right: 4px; }
.leaf {
  padding-left: 27px;
  background:
    repeating-linear-gradient(#999 0 1px, transparent 1px 2px) 16px 0 / 1px 16px no-repeat,
    repeating-linear-gradient(90deg, #999 0 1px, transparent 1px 2px) 16px 8px / 11px 1px no-repeat;
}
.leaf.last {
  background:
    repeating-linear-gradient(#999 0 1px, transparent 1px 2px) 16px 0 / 1px 8px no-repeat,
    repeating-linear-gradient(90deg, #999 0 1px, transparent 1px 2px) 16px 8px / 11px 1px no-repeat;
}
.picked { display: flex; align-items: center; height: 16px; margin-left: -1px; padding-left: 1px; padding-right: 4px; font-weight: 400; border-radius: 2px; background: #f0f0f0; box-shadow: inset 0 0 0 1px #dcdcdc; }

.mid { display: flex; flex-direction: column; min-height: 0; }
.midbar {
  display: flex;
  align-items: center;
  gap: 7px;
  height: 28px;
  padding-left: 6px;
  background: linear-gradient(#fbfcfe, #e0e6f3 48%, #d0d9ec 50%, #e0e5f6);
}
.midbar button { gap: 3px; }
.find { display: flex; align-items: center; height: 25px; margin: 0 0 2px 1px; gap: 4px; background: #f3f5fa; border-bottom: 1px solid #b5b5b5; }
.find input { flex: 1; min-width: 0; height: 22px; padding: 0 2px; border: 0; background: #fff; box-shadow: inset 0 0 0 1px #e3e5ea; }
.find button { width: 20px; color: #55a9e2; }
input::placeholder { color: #8a8a8a; opacity: 1; }
.box { border: 2px solid #a5a5a8; border-width: 1px 2px 2px 1px; background: #fff; margin-left: 1px; }
.list { flex: 403 1 0; }
.props { margin-top: 6px; margin-bottom: 1px; }
.rest { flex: 293 1 0; border-bottom: 0; }
.grid { width: 100%; table-layout: fixed; }
.grid th {
  height: 22px;
  padding: 0;
  font-weight: 400;
  text-align: center;
  overflow: hidden;
  background: linear-gradient(#fff, #f0f0f0);
  border-right: 1px solid #b9b9b9;
  border-bottom: 1px solid #b9b9b9;
}
.grid th.cut { text-align: left; padding-left: 5px; border-right: 0; }
.c20 { width: 20px; }
.c26 { width: 26px; }
.c39 { width: 39px; }
.c46 { width: 46px; }
.c80 { width: 80px; }
.c101 { width: 101px; }
.c120 { width: 120px; }
.c151 { width: 151px; }
.c199 { width: 199px; }
.c201 { width: 201px; }
.c271 { width: 271px; }

.right { display: flex; flex-direction: column; min-width: 0; min-height: 0; margin-left: 2px; }
.actbar {
  display: flex;
  align-items: center;
  gap: 7px;
  flex: none;
  height: 28px;
  padding-left: 5px;
  overflow: hidden;
  background: linear-gradient(#fbfcfe, #e0e6f3 48%, #d0d9ec 50%, #e0e5f6);
}
.actbar .sep + button { margin-left: -2px; }
.actbar .arr { width: 7px; margin-right: -2px; }
.actbar .tight { margin-left: -3px; }
.sheet { flex: 395 1 0; background: #fff; border-left: 2px solid #a5a5a8; border-top: 1px solid #9f9f9f; border-bottom: 2px solid #a5a5a8; overflow: hidden; }
.qcap { flex: none; height: 19px; margin-top: 6px; padding-left: 2px; border: 1px solid #9a9a9a; border-right: 0; line-height: 18px; }
.qbody { flex: 340 1 0; padding: 1px 0 0 2px; background: #fff; border-left: 1px solid #a5a5a8; border-top: 1px solid #a5a5a8; }
.nums { width: 36px; font: 11px/16px "Liberation Mono", monospace; }
.nums th { height: 21px; padding: 0; background: linear-gradient(#fff, #eee); border-bottom: 1px solid #c4c4c4; }
.nums td { height: 19px; padding: 0; text-align: center; background: linear-gradient(#fafafa, #efefef); border-bottom: 1px solid #c4c4c4; }
.nums .cur td { background: #ffd08a; color: #70004a; }

/* File dialog */
.dialog {
  position: absolute;
  left: 418px;
  right: 106px;
  top: 282px;
  bottom: 21px;
  display: flex;
  flex-direction: column;
  padding: 0 6px 6px;
  border: 1px solid #20262e;
  border-radius: 7px;
  background:
    radial-gradient(ellipse 12px 18px at 0 213px, #7897b8, transparent),
    radial-gradient(ellipse 12px 16px at 100% 216px, #8fb0d4, transparent),
    linear-gradient(100deg, #d8eafd 0, #b7dafe 22%, #b2d6fb 60%, #d0e7fe 82%, #bcdcfd);
  box-shadow: inset 0 0 0 1px #e9f5ff, 1px 3px 12px 4px rgba(0, 0, 0, .6);
}
.dtitle { display: flex; align-items: center; gap: 5px; height: 28px; padding-left: 1px; }
.dtitle h1 { flex: 1; text-shadow: 0 0 8px #fff, 0 0 8px #fff; }
.x {
  align-self: flex-start;
  justify-content: center;
  width: 47px;
  height: 19px;
  border: 1px solid #5b2424;
  border-top: 0;
  border-radius: 0 0 5px 5px;
  background: linear-gradient(#eab2a8, #d98577 45%, #c13a25 50%, #d9694f);
  box-shadow: inset 0 0 0 1px rgba(255, 255, 255, .45);
}
.x svg { width: 12px; height: 10px; }
.dnav { display: flex; align-items: center; height: 35px; padding-right: 2px; }
.bf { width: 56px; height: 28px; flex: none; margin-left: 2px; }
.recentarr { width: 10px; height: 8px; margin: 0 3px 0 1px; flex: none; }
.addr, .dsearch {
  display: flex;
  align-items: center;
  height: 23px;
  border: 1px solid #6f8196;
  background: rgba(245, 250, 255, .85);
}
.addr { flex: 1; min-width: 0; padding: 0 0 1px 2px; }
.crumb { width: 8px; height: 8px; margin: 0 9px; flex: none; }
.crumb.first { margin: 0 8px; }
.pathdrop { margin-left: auto; width: 20px; height: 100%; justify-content: center; color: #00004c; }
.reload { width: 25px; height: 100%; justify-content: center; border-left: 1px solid #6f8196; }
.dsearch { flex: none; width: 202px; margin-left: 6px; padding: 0 4px 0 9px; color: #28629f; }
.dsearch input { flex: 1; min-width: 0; border: 0; padding: 0; background: none; font-style: italic; }
.dsearch input::placeholder { color: #6d7278; }
.client { flex: 1; min-height: 0; display: flex; flex-direction: column; border: 1px solid #566676; background: #f0f0f0; }
.cmd {
  display: flex;
  align-items: center;
  gap: 30px;
  flex: none;
  height: 32px;
  padding: 0 15px 0 18px;
  color: #1e395b;
  background: linear-gradient(#fcfeff, #ebf3fb 48%, #dce6f4 50%, #dee8f5);
  border-bottom: 1px solid #a0afc3;
}
.cmd button { gap: 5px; }
.cmd .views { margin-left: auto; gap: 9px; margin-right: -8px; }
.cmd .views + button { margin-right: -10px; }
.files { flex: 1; min-height: 0; display: flex; background: #fcfcfc; }
.places { width: 141px; flex: none; padding-top: 9px; overflow: hidden; }
.places li { display: flex; align-items: center; gap: 5px; height: 23px; padding-left: 30px; }
.places .head { padding-left: 20px; }
.places .gap { margin-top: 23px; }
.places .on { background: linear-gradient(#f7f7f7, #e6e6e6); border: 1px solid #d9d9d9; border-right: 0; border-radius: 3px 0 0 3px; margin-left: 1px; padding-left: 18px; }
.scroll { width: 16px; flex: none; display: flex; flex-direction: column; align-items: center; padding: 5px 0; background: #f0f0f0; color: #444; }
.scroll .up { transform: rotate(180deg); }
.thumb {
  width: 15px;
  height: 61%;
  margin: 5px 0 auto;
  display: flex;
  flex-direction: column;
  align-items: center;
  justify-content: center;
  gap: 2px;
  border: 1px solid #959595;
  border-radius: 2px;
  background: linear-gradient(90deg, #f6f6f6, #dcdce0 50%, #c4c5ca);
}
.thumb i { width: 7px; height: 1px; background: #444; }
.listing { flex: 1; min-width: 0; margin-left: 1px; border-left: 1px solid #d6e5f5; }
.listing table { width: 100%; table-layout: fixed; }
.listing th { position: relative; height: 23px; padding: 4px 0 0 6px; font-weight: 400; text-align: left; color: #4c607a; border-right: 1px solid #e6edf5; }
.listing th:first-child, .listing td:first-child { padding-left: 18px; }
.listing th:last-child { border: 0; }
.sort { position: absolute; left: 50%; top: 1px; width: 8px; height: 4px; }
.listing td { height: 21px; padding: 0 0 0 7px; color: #6d6d6d; }
.listing tbody::before { content: ""; display: block; height: 10px; }
.listing td span { display: flex; align-items: center; gap: 5px; color: #000; }
.listing .size { text-align: right; padding-right: 7px; }
.foot { position: relative; display: flex; align-items: flex-start; flex: none; height: 84px; padding: 11px 17px 0 130px; }
.foot label { line-height: 26px; margin-right: 6px; }
.combo { flex: 1; display: flex; align-items: center; height: 26px; padding: 0 3px; border: 1px solid #7fb3dc; border-top-color: #3d7bad; background: #fff; }
.combo input { flex: 1; min-width: 0; border: 0; padding: 0; outline: 0; background: none; }
.combo button { width: 10px; justify-content: center; }
.caret { width: 1px; height: 17px; background: #000; }
.choices { width: 188px; flex: none; margin-left: 12px; display: flex; flex-direction: column; gap: 7px; }
.ftype { display: grid; align-items: center; height: 25px; border: 1px solid #707070; border-radius: 2px; background: linear-gradient(#f2f2f2, #ebebeb 49%, #dcdcdc 50%, #cfcfcf); }
.ftype select { grid-area: 1 / 1; width: 100%; min-width: 0; appearance: none; border: 0; background: none; padding: 0 18px 0 3px; }
.ftype .arr { grid-area: 1 / 1; justify-self: end; margin-right: 4px; pointer-events: none; }
.btns { display: flex; justify-content: space-between; padding: 0 1px; }
.push { width: 86px; height: 28px; justify-content: center; gap: 0; border: 1px solid #707070; border-radius: 3px; background: linear-gradient(#f2f2f2, #ebebeb 49%, #dddddd 50%, #cfcfcf); }
.push.primary { border-color: #3c7fb1; box-shadow: inset 0 0 0 1px #46d8fb; background: linear-gradient(#eef3f6, #dfe8ee 49%, #cbd8e0 50%, #c8d2da); }
.size-grip { position: absolute; right: 2px; bottom: 2px; width: 9px; height: 9px; }
```
